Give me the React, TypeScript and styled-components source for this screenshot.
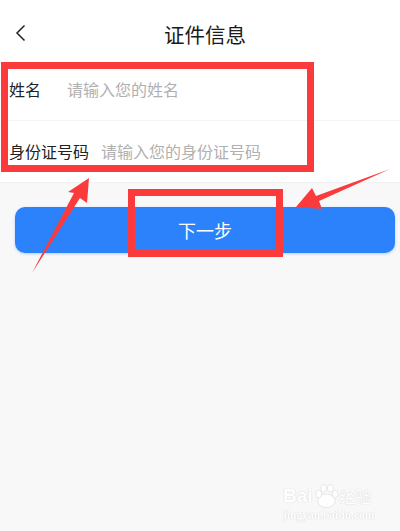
import React from 'react';
import styled, { createGlobalStyle } from 'styled-components';

const GlobalStyle = createGlobalStyle`
body {
  margin: 0;
  background: #f8f8f9;
  font-family: "Noto Sans CJK SC", "Noto Sans", sans-serif;
}
`;

const Page = styled.div`
position: relative;
width: 400px;
height: 531px;
overflow: hidden;
background: #f8f8f9;
`;

const Header = styled.header`
height: 60px;
padding: 0 14px;
display: flex;
align-items: center;
justify-content: center;
position: relative;
background: #fff;
color: #1a1a1a;
`;

const BackButton = styled.button`
position: absolute;
left: 12px;
top: 21px;
padding: 0;
border: 0;
background: none;
display: flex;
color: #222;
`;

const Title = styled.h1`
margin: 7px 0 0 10px;
font-size: 20.5px;
line-height: 28px;
font-weight: 400;
`;

const Form = styled.form`
background: #fff;
border-bottom: 1px solid #f0f0f0;
`;

const Row = styled.label<{ $height: number; $gap: number; $line?: boolean }>`
height: ${(p) => p.$height}px;
padding-left: 9px;
padding-bottom: ${(p) => (p.$line ? 2 : 1)}px;
box-sizing: border-box;
display: flex;
align-items: center;
gap: ${(p) => p.$gap}px;
font-size: 16px;
color: #222;
border-bottom: ${(p) => (p.$line ? '1px solid #f4f4f4' : '0')};
`;

const Field = styled.input`
flex: 1;
min-width: 0;
padding: 0;
border: 0;
outline: none;
background: none;
font: inherit;
&::placeholder {
  color: #b0b0b0;
  opacity: 1;
}
`;

const NextButton = styled.button`
display: block;
width: 380px;
height: 46px;
margin: 24px 0 0 15px;
padding: 0;
border: 0;
border-radius: 10px;
background: #2b82fb;
box-shadow: 0 1px 3px rgba(43, 130, 251, 0.35);
color: #fff;
font: inherit;
font-size: 18px;
`;

const RedFrame = styled.div<{ $left: number; $top: number; $width: number; $height: number }>`
position: absolute;
left: ${(p) => p.$left}px;
top: ${(p) => p.$top}px;
width: ${(p) => p.$width}px;
height: ${(p) => p.$height}px;
box-sizing: border-box;
border: 7px solid #fb3a3c;
pointer-events: none;
`;

const ArrowLayer = styled.svg`
position: absolute;
left: 0;
top: 0;
pointer-events: none;
`;

const Watermark = styled.div`
position: absolute;
left: 283px;
top: 483px;
width: 92px;
color: #fff;
text-shadow: 0 0 1px #d8d8d8, 0 0 1px #d8d8d8;
`;

const BrandLine = styled.div`
display: flex;
align-items: center;
height: 26px;
font-family: "Liberation Sans", sans-serif;
font-weight: 700;
font-size: 19px;
`;

const BrandCjk = styled.span`
font-family: "Noto Sans CJK SC", sans-serif;
font-size: 16px;
font-weight: 400;
`;

const SiteLine = styled.div`
font-family: "Liberation Serif", serif;
font-weight: 700;
font-size: 11.5px;
line-height: 13px;
margin-top: 0;
white-space: nowrap;
`;

const App: React.FC = () => {
  return (
    <Page>
      <GlobalStyle />
      <Header>
        <BackButton type="button" aria-label="back">
          <svg width="18" height="24" viewBox="0 0 18 24" fill="none">
            <path d="M12.5 4.5 L5 12 L12.5 19.5" stroke="currentColor" strokeWidth="1.5" />
          </svg>
        </BackButton>
        <Title>证件信息</Title>
      </Header>
      <Form>
        <Row $height={61} $gap={26} $line>
          姓名
          <Field placeholder="请输入您的姓名" />
        </Row>
        <Row $height={61} $gap={12}>
          身份证号码
          <Field placeholder="请输入您的身份证号码" />
        </Row>
      </Form>
      <NextButton type="button">下一步</NextButton>

      <RedFrame $left={1} $top={62} $width={313} $height={110} />
      <RedFrame $left={128} $top={189} $width={155} $height={68} />
      <ArrowLayer width="400" height="531" viewBox="0 0 400 531">
        <path d="M89 178 L87 203 L80 198 L32 273 L74 193 L68 192 Z" fill="#fb3a3c" />
        <path d="M296 207 L312 188 L316 196 L390 169 L319 201 L322 209 Z" fill="#fb3a3c" />
      </ArrowLayer>

      <Watermark>
        <BrandLine>
          Bai
          <svg width="27" height="26" viewBox="0 0 28 26" fill="#fff" stroke="#dcdcdc" strokeWidth="0.7">
            <ellipse cx="14" cy="18" rx="9" ry="7" />
            <ellipse cx="6" cy="11" rx="3" ry="4" />
            <ellipse cx="11" cy="5" rx="3" ry="4" />
            <ellipse cx="18" cy="5" rx="3" ry="4" />
            <ellipse cx="23" cy="11" rx="3" ry="4" />
          </svg>
          <BrandCjk>经验</BrandCjk>
        </BrandLine>
        <SiteLine>jingyan.baidu.com</SiteLine>
      </Watermark>
    </Page>
  );
};

export default App;
